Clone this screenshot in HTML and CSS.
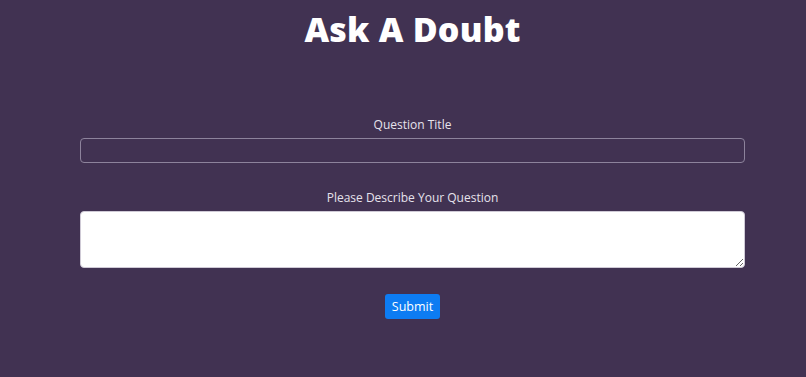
FILE: index.html
```html
<!DOCTYPE HTML>
<html lang="en">
  <head>
    <title>Ask A Doubt</title>
    <meta charset="utf-8">
    <link rel="stylesheet" href="styles.css">
  </head>
  <body>

  <div id="page">
    <h1 class="title">Ask A Doubt</h1>

    <form class="doubt-form">
      <label class="field">
        <span class="label">Question Title</span>
        <input type="text" class="input">
      </label>

      <label class="field">
        <span class="label">Please Describe Your Question</span>
        <textarea class="input area"></textarea>
      </label>

      <button type="button" class="btn">Submit</button>
    </form>
  </div>

  </body>
</html>
```

FILE: styles.css
```css
html {
  height: 100%;
}
body {
  margin: 0;
  padding: 0;
  background: #413252;
  color: #ffffff;
  font-family: "Open Sans", "DejaVu Sans", sans-serif;
  height: 100%;
}
#page {
  padding: 0 61px 0 80px;
}
.title {
  margin: 0;
  padding-top: 9px;
  text-align: center;
  font-size: 34px;
  font-weight: 800;
  line-height: 40px;
  letter-spacing: 0.2px;
}
.doubt-form {
  display: flex;
  flex-direction: column;
  align-items: center;
  padding-top: 67px;
}
.field {
  display: flex;
  flex-direction: column;
  align-items: center;
  width: 100%;
  margin-bottom: 26px;
}
.label {
  font-size: 12px;
  line-height: 16px;
  color: #e6e2ec;
  padding-top: 1px;
  margin-bottom: 5px;
}
.input {
  box-sizing: border-box;
  width: 100%;
  height: 25px;
  margin: 0;
  border: 1px solid #8d839c;
  border-radius: 4px;
  background: transparent;
  color: #fff;
  font: 13px "Open Sans", sans-serif;
  padding: 2px 8px;
}
.area {
  height: 57px;
  background: #ffffff;
  color: #222;
  border-color: #cfcad6;
  resize: vertical;
}
.btn {
  width: 55px;
  height: 25px;
  border: none;
  border-radius: 3px;
  background: #0d7cf2;
  color: #fff;
  font: 12.5px "Open Sans", sans-serif;
  cursor: pointer;
}
```
